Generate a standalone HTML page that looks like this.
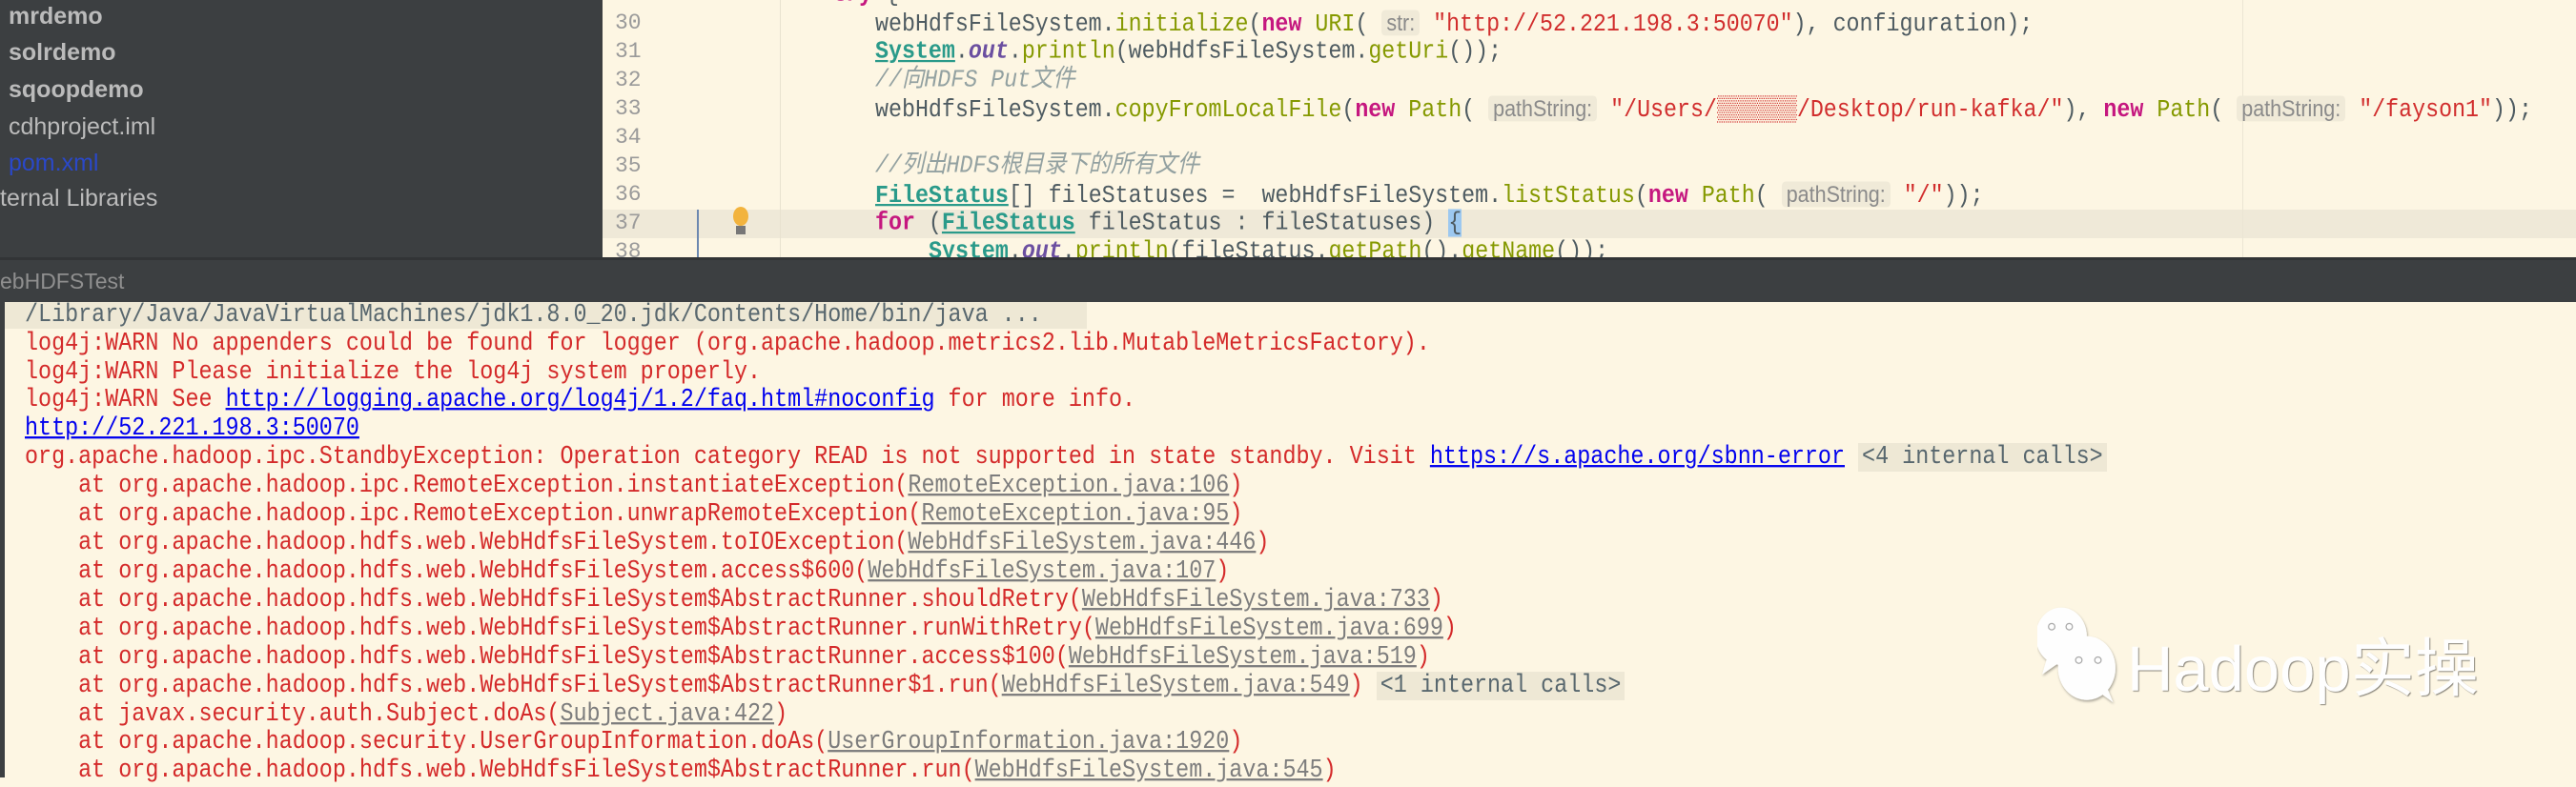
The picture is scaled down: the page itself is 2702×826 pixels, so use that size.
<!DOCTYPE html>
<html><head><meta charset="utf-8"><style>
*{margin:0;padding:0;box-sizing:border-box}
body{width:2702px;height:816px;overflow:hidden;background:#fdf6e3;position:relative;font-family:"Liberation Mono","Noto Sans CJK SC",monospace}
.abs{position:absolute;white-space:pre}
#left{left:0;top:0;width:632px;height:270px;background:#3c3f41}
.tree{position:absolute;left:9px;font-family:"Liberation Sans",sans-serif;font-size:25px;color:#bbbbbb;line-height:30px}
#ed{left:632px;top:0;width:2070px;height:270px;background:#fdf6e3;overflow:hidden}
.ln{position:absolute;left:13px;width:40px;color:#9a9a9a;font-size:23px;line-height:30px}
.code{position:absolute;font-size:23.3px;line-height:30px;color:#4e5b61;white-space:pre;transform:scaleY(1.12);transform-origin:left center}
.kw{color:#c5177f;font-weight:bold}.fn{color:#859900}.str{color:#d12d2d}.cls{color:#2a9a8a;text-decoration:underline;font-weight:bold}
.it{font-style:italic;color:#6b4fa0;font-weight:bold}.cm{color:#93a1a1;font-style:italic;font-family:"Liberation Mono","Noto Sans CJK SC",monospace}
.hint{background:#f0ead8;color:#8a8a8a;font-family:"Liberation Sans",sans-serif;font-size:21.5px;padding:0 5px;border-radius:4px}
#bar{left:0;top:270px;width:2702px;height:47px;background:#3c3f41;border-top:3px solid #323436}
#bar span{position:absolute;left:0;top:9px;font-family:"Liberation Sans",sans-serif;font-size:23px;color:#8f8f8f}
#con{left:0;top:317px;width:2702px;height:499px;background:#fdf6e3;border-left:5px solid #3c3f41}
.c{position:absolute;left:26px;font-size:23.4px;line-height:30px;color:#d42a2a;white-space:pre;transform:scaleY(1.15);transform-origin:left center}
.g{color:#58676e}.lk{color:#0000ee;text-decoration:underline}.fl{color:#7d7d7d;text-decoration:underline}
.ic{background:#eee8d5;color:#58676e;padding:0 4px}
</style></head><body>
<div id="left" class="abs">
<div class="tree" style="top:2px;font-weight:bold">mrdemo</div>
<div class="tree" style="top:40px;font-weight:bold">solrdemo</div>
<div class="tree" style="top:79px;font-weight:bold">sqoopdemo</div>
<div class="tree" style="top:118px">cdhproject.iml</div>
<div class="tree" style="top:156px;color:#2a48c8">pom.xml</div>
<div class="tree" style="top:193px;left:0">ternal Libraries</div>
</div>
<div id="ed" class="abs">
<div style="position:absolute;left:0;top:220px;width:2070px;height:30px;background:#efe9d8"></div>
<div style="position:absolute;left:186px;top:0;width:1px;height:270px;background:#e8e2d0"></div>
<div style="position:absolute;left:1720px;top:0;width:1px;height:270px;background:#ebe5d3"></div>
<div style="position:absolute;left:99px;top:220px;width:2px;height:50px;background:#6c88b0"></div>
<svg style="position:absolute;left:135px;top:216px" width="20" height="34"><ellipse cx="10" cy="11" rx="8" ry="10" fill="#f2b33d"/><rect x="5" y="21" width="10" height="9" fill="#777"/></svg>
<div class="ln" style="top:9px">30</div><div class="ln" style="top:39px">31</div><div class="ln" style="top:69px">32</div><div class="ln" style="top:99px">33</div><div class="ln" style="top:129px">34</div><div class="ln" style="top:159px">35</div><div class="ln" style="top:189px">36</div><div class="ln" style="top:219px">37</div><div class="ln" style="top:249px">38</div>
<div class="code" style="left:241px;top:-21px"><span class="kw">try</span> {</div>
<div class="code" style="left:286px;top:9px">webHdfsFileSystem.<span class="fn">initialize</span>(<span class="kw">new</span> <span class="fn">URI</span>( <span class="hint">str:</span> <span class="str">"http://52.221.198.3:50070"</span>), configuration);</div>
<div class="code" style="left:286px;top:39px"><span class="cls">System</span>.<span class="it">out</span>.<span class="fn">println</span>(webHdfsFileSystem.<span class="fn">getUri</span>());</div>
<div class="code cm" style="left:286px;top:69px">//向HDFS Put文件</div>
<div class="code" style="left:286px;top:99px">webHdfsFileSystem.<span class="fn">copyFromLocalFile</span>(<span class="kw">new</span> <span class="fn">Path</span>( <span class="hint">pathString:</span> <span class="str">"/Users/▒▒▒▒▒▒/Desktop/run-kafka/"</span>), <span class="kw">new</span> <span class="fn">Path</span>( <span class="hint">pathString:</span> <span class="str">"/fayson1"</span>));</div>
<div class="code cm" style="left:286px;top:159px">//列出HDFS根目录下的所有文件</div>
<div class="code" style="left:286px;top:189px"><span class="cls">FileStatus</span>[] fileStatuses =  webHdfsFileSystem.<span class="fn">listStatus</span>(<span class="kw">new</span> <span class="fn">Path</span>( <span class="hint">pathString:</span> <span class="str">"/"</span>));</div>
<div class="code" style="left:286px;top:219px"><span class="kw">for</span> (<span class="cls">FileStatus</span> fileStatus : fileStatuses) <span style="background:#9cc8f0">{</span></div>
<div class="code" style="left:342px;top:249px"><span class="cls">System</span>.<span class="it">out</span>.<span class="fn">println</span>(fileStatus.<span class="fn">getPath</span>().<span class="fn">getName</span>());</div>
</div>
<div id="bar" class="abs"><span>ebHDFSTest</span></div>
<div id="con" class="abs">
<div style="position:absolute;left:0;top:0;width:1135px;height:28px;background:#eee8d5"></div>
<div class="c g" style="top:-1px;left:21px">/Library/Java/JavaVirtualMachines/jdk1.8.0_20.jdk/Contents/Home/bin/java ...</div>
<div class="c" style="top:29px;left:21px">log4j:WARN No appenders could be found for logger (org.apache.hadoop.metrics2.lib.MutableMetricsFactory).</div>
<div class="c" style="top:59px;left:21px">log4j:WARN Please initialize the log4j system properly.</div>
<div class="c" style="top:88px;left:21px">log4j:WARN See <span class="lk">http://logging.apache.org/log4j/1.2/faq.html#noconfig</span> for more info.</div>
<div class="c" style="top:118px;left:21px"><span class="lk">http://52.221.198.3:50070</span></div>
<div class="c" style="top:148px;left:21px">org.apache.hadoop.ipc.StandbyException: Operation category READ is not supported in state standby. Visit <span class="lk">https://s.apache.org/sbnn-error</span> <span class="ic">&lt;4 internal calls&gt;</span></div>
<div class="c" style="top:178px;left:21px">    at org.apache.hadoop.ipc.RemoteException.instantiateException(<span class="fl">RemoteException.java:106</span>)</div>
<div class="c" style="top:208px;left:21px">    at org.apache.hadoop.ipc.RemoteException.unwrapRemoteException(<span class="fl">RemoteException.java:95</span>)</div>
<div class="c" style="top:238px;left:21px">    at org.apache.hadoop.hdfs.web.WebHdfsFileSystem.toIOException(<span class="fl">WebHdfsFileSystem.java:446</span>)</div>
<div class="c" style="top:268px;left:21px">    at org.apache.hadoop.hdfs.web.WebHdfsFileSystem.access$600(<span class="fl">WebHdfsFileSystem.java:107</span>)</div>
<div class="c" style="top:298px;left:21px">    at org.apache.hadoop.hdfs.web.WebHdfsFileSystem$AbstractRunner.shouldRetry(<span class="fl">WebHdfsFileSystem.java:733</span>)</div>
<div class="c" style="top:328px;left:21px">    at org.apache.hadoop.hdfs.web.WebHdfsFileSystem$AbstractRunner.runWithRetry(<span class="fl">WebHdfsFileSystem.java:699</span>)</div>
<div class="c" style="top:358px;left:21px">    at org.apache.hadoop.hdfs.web.WebHdfsFileSystem$AbstractRunner.access$100(<span class="fl">WebHdfsFileSystem.java:519</span>)</div>
<div class="c" style="top:388px;left:21px">    at org.apache.hadoop.hdfs.web.WebHdfsFileSystem$AbstractRunner$1.run(<span class="fl">WebHdfsFileSystem.java:549</span>) <span class="ic">&lt;1 internal calls&gt;</span></div>
<div class="c" style="top:418px;left:21px">    at javax.security.auth.Subject.doAs(<span class="fl">Subject.java:422</span>)</div>
<div class="c" style="top:447px;left:21px">    at org.apache.hadoop.security.UserGroupInformation.doAs(<span class="fl">UserGroupInformation.java:1920</span>)</div>
<div class="c" style="top:477px;left:21px">    at org.apache.hadoop.hdfs.web.WebHdfsFileSystem$AbstractRunner.run(<span class="fl">WebHdfsFileSystem.java:545</span>)</div>
</div>
<svg class="abs" style="left:2137px;top:632px" width="92" height="110" viewBox="0 0 110 130">
<defs><filter id="sh"><feDropShadow dx="1" dy="2" stdDeviation="1.5" flood-color="#000" flood-opacity="0.35"/></filter></defs>
<g filter="url(#sh)" fill="#fefefe">
<ellipse cx="30" cy="42" rx="32" ry="36"/><path d="M12 70 L6 90 L26 76Z"/>
<ellipse cx="62" cy="82" rx="36" ry="40"/><path d="M80 114 L95 125 L88 108Z"/>
</g>
<circle cx="18" cy="30" r="4" fill="none" stroke="#aaa" stroke-width="1.5"/><circle cx="40" cy="30" r="4" fill="none" stroke="#aaa" stroke-width="1.5"/>
<circle cx="52" cy="72" r="4" fill="none" stroke="#aaa" stroke-width="1.5"/><circle cx="76" cy="72" r="4" fill="none" stroke="#aaa" stroke-width="1.5"/>
</svg>
<div class="abs" style="left:2231px;top:648px;font-family:'Liberation Sans','Noto Sans CJK SC',sans-serif;font-size:67px;color:#fefefe;text-shadow:1px 1px 1px rgba(0,0,0,.45)">Hadoop实操</div>
</body></html>
